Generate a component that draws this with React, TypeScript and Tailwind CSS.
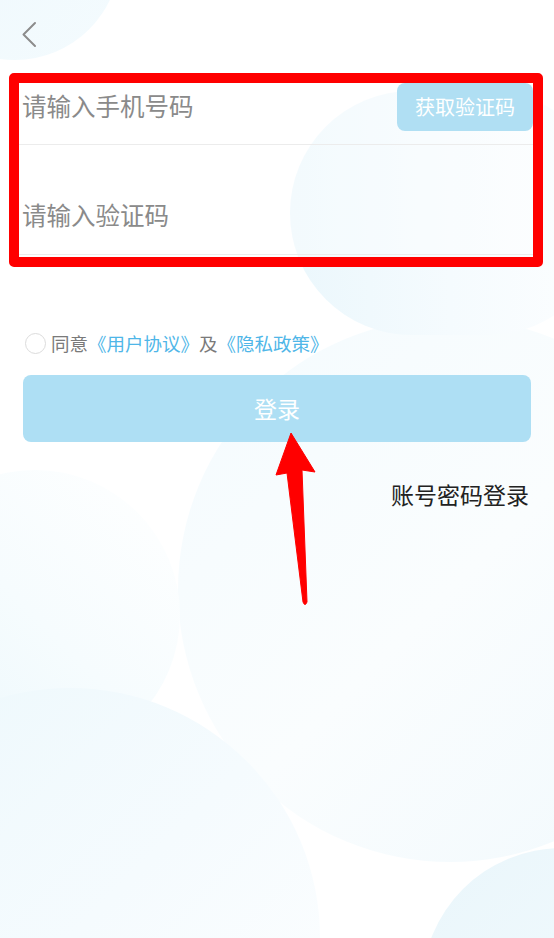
import { useState } from "react";

const font = { fontFamily: '"Noto Sans CJK SC", "Noto Sans", sans-serif' };

function Backdrop() {
  // soft pale blue bubbles behind the form
  return (
    <div className="pointer-events-none absolute inset-0 overflow-hidden">
      <div className="absolute left-[-90px] top-[-150px] h-[210px] w-[210px] rounded-full bg-gradient-to-br from-[#edf8fc] to-[#f4fbfe]" />
      <div className="absolute left-[178px] top-[318px] h-[544px] w-[544px] rounded-full bg-gradient-to-br from-[#f4fbfe] via-[#fafdfe] to-[#f1f9fd]" />
      <div className="absolute left-[290px] top-[91px] h-[244px] w-[320px] rounded-full bg-gradient-to-r from-[#ebf7fc] via-[#f5fbfe] to-[#fdfeff]" />
      <div className="absolute left-[-110px] top-[470px] h-[290px] w-[290px] rounded-full bg-gradient-to-tr from-[#eaf7fc] via-[#f6fcfe] to-[#ffffff]" />
      <div className="absolute left-[-180px] top-[688px] h-[500px] w-[500px] rounded-full bg-gradient-to-br from-[#ecf8fc] via-[#f5fbfe] to-[#ffffff]" />
      <div className="absolute left-[422px] top-[848px] h-[280px] w-[280px] rounded-full bg-gradient-to-br from-[#eaf6fb] to-[#f4fbfe]" />
    </div>
  );
}

function Arrow() {
  return (
    <svg className="pointer-events-none absolute left-0 top-0 z-20" width="554" height="938" viewBox="0 0 554 938">
      <path
        d="M291 433 L315 472 L302 470 L307 602 Q305 607 303 602 L287 473 L276 475 Z"
        fill="#ff0000"
        stroke="#ff0000"
        strokeWidth="1"
        strokeLinejoin="round"
      />
    </svg>
  );
}

export default function App() {
  const [agreed, setAgreed] = useState(false);

  return (
    <div className="relative h-[938px] w-[554px] overflow-hidden bg-white" style={font}>
      <Backdrop />
      <Arrow />

      <div className="relative z-10 flex flex-col">
        <div className="h-[73px] pl-[21px] pt-[21px]">
          <svg width="16" height="27" viewBox="0 0 16 27">
            <path d="M14 2 L2.5 13.5 L14 25" fill="none" stroke="#8c8c8c" strokeWidth="2" strokeLinecap="round" strokeLinejoin="round" />
          </svg>
        </div>

        <div className="ml-[9px] w-[534px] rounded-[5px] border-[10px] border-[#ff0000] bg-white/40">
          <div className="flex h-[62px] items-start justify-between border-b border-[#ececec]">
            <span className="pl-[3px] text-[24.5px] leading-[46px] text-[#8a8a8a]">请输入手机号码</span>
            <button className="flex h-[48px] w-[136px] items-center justify-center rounded-[8px] bg-[#b0dff3] text-[20px] text-white">
              获取验证码
            </button>
          </div>
          <div className="h-[110px] border-b border-[#ececec] pl-[3px] pt-[50px]">
            <span className="text-[24.5px] leading-[40px] text-[#8a8a8a]">请输入验证码</span>
          </div>
          <div className="h-[2px]" />
        </div>

        <div className="mt-[64px] flex items-center pl-[25px] text-[18.5px] leading-[24px]">
          <button
            onClick={() => setAgreed(!agreed)}
            className="h-[21px] w-[21px] rounded-full border-[1.5px] border-[#dcdcdc] bg-white/60"
          />
          <span className="ml-[5px] text-[#7a7a7a]">同意</span>
          <span className="text-[#4fb6e8]">《用户协议》</span>
          <span className="text-[#7a7a7a]">及</span>
          <span className="text-[#4fb6e8]">《隐私政策》</span>
        </div>

        <button className="mx-[23px] mt-[20px] flex h-[67px] items-center justify-center rounded-[8px] bg-[#aedff4] text-[23px] text-white">
          登录
        </button>

        <div className="mt-[37px] flex justify-end pr-[25px]">
          <span className="text-[23px] leading-[30px] text-[#222222]">账号密码登录</span>
        </div>
      </div>
    </div>
  );
}
